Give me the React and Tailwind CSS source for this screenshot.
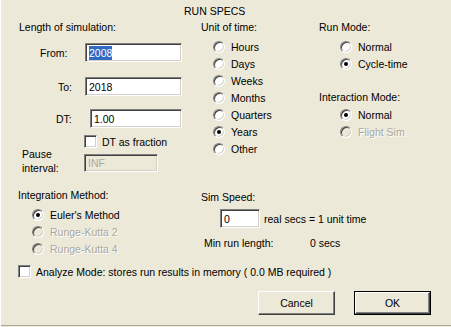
import React from "react";

// classic sunken edit box
function Field({ w, h = "h-[19px]", disabled, children }) {
  return (
    <div
      className={`${w} ${h} flex items-center border border-t-[#808080] border-l-[#808080] border-b-white border-r-white shadow-[inset_1px_1px_0_#404040,inset_-1px_-1px_0_#d4d0c8] pl-[3px] ${
        disabled ? "bg-[#ece9d8] text-[#aca899]" : "bg-white"
      }`}
    >
      {children}
    </div>
  );
}

function Radio({ label, checked, disabled }) {
  return (
    <div className="h-[17px] flex items-center">
      <div
        className={`w-[12px] h-[12px] rounded-full flex items-center justify-center border border-t-[#808080] border-l-[#808080] border-b-white border-r-white shadow-[inset_1px_1px_0_#404040,inset_-1px_-1px_0_#d4d0c8] ${
          disabled ? "bg-[#ece9d8]" : "bg-white"
        }`}
      >
        {checked && <div className="w-[4px] h-[4px] rounded-full bg-black" />}
      </div>
      <span
        className={`ml-[6px] ${disabled ? "text-[#aca899] [text-shadow:1px_1px_0_#fff]" : ""}`}
      >
        {label}
      </span>
    </div>
  );
}

function Check({ label }) {
  return (
    <div className="h-[13px] flex items-center">
      <div className="w-[13px] h-[13px] bg-white border border-t-[#808080] border-l-[#808080] border-b-white border-r-white shadow-[inset_1px_1px_0_#404040,inset_-1px_-1px_0_#d4d0c8]" />
      <span className="ml-[5px]">{label}</span>
    </div>
  );
}

function Button({ children, def }) {
  return (
    <div
      className={`w-[77px] h-[24px] flex items-center justify-center bg-[#ece9d8] ${
        def ? "border border-black" : ""
      }`}
    >
      <div className="w-full h-full flex items-center justify-center border border-t-white border-l-white border-b-[#404040] border-r-[#404040] shadow-[inset_-1px_-1px_0_#808080]">
        {children}
      </div>
    </div>
  );
}

export default function App() {
  return (
    <div
      className="w-[451px] h-[327px] bg-[#ece9d8] text-black text-[10.5px] leading-[14px] border-l border-l-white overflow-hidden"
      style={{ fontFamily: '"Liberation Sans", Arial, sans-serif' }}
    >
      <div className="pt-[4px] h-[18px] pl-[183px]">RUN SPECS</div>

      {/* top section */}
      <div className="mt-[2px] h-[168px] flex items-start">
        {/* length of simulation */}
        <div className="w-[200px] pl-[18px]">
          <div>Length of simulation:</div>
          <div className="mt-[9px] flex items-center">
            <span className="ml-[21px] w-[45px]">From:</span>
            <Field w="w-[97px]">
              <span className="bg-[#316ac5] text-white">2008</span>
            </Field>
          </div>
          <div className="mt-[15px] flex items-center">
            <span className="ml-[39px] w-[27px]">To:</span>
            <Field w="w-[97px]">2018</Field>
          </div>
          <div className="mt-[13px] flex items-center">
            <span className="ml-[37px] w-[34px]">DT:</span>
            <Field w="w-[92px]">1.00</Field>
          </div>
          <div className="mt-[7px] ml-[65px]">
            <Check label="DT as fraction" />
          </div>
          <div className="mt-[-1px] flex items-start">
            <div className="ml-[3px] w-[62px]">
              <div>Pause</div>
              <div>interval:</div>
            </div>
            <div className="mt-[7px]">
              <Field w="w-[74px]" h="h-[18px]" disabled>
                INF
              </Field>
            </div>
          </div>
        </div>

        {/* unit of time */}
        <div className="w-[118px]">
          <div>Unit of time:</div>
          <div className="mt-[4px] pl-[12px]">
            <Radio label="Hours" />
            <Radio label="Days" />
            <Radio label="Weeks" />
            <Radio label="Months" />
            <Radio label="Quarters" />
            <Radio label="Years" checked />
            <Radio label="Other" />
          </div>
        </div>

        {/* run mode */}
        <div className="flex-1">
          <div>Run Mode:</div>
          <div className="mt-[4px] pl-[21px]">
            <Radio label="Normal" />
            <Radio label="Cycle-time" checked />
          </div>
          <div className="mt-[18px]">Interaction Mode:</div>
          <div className="mt-[2px] pl-[21px]">
            <Radio label="Normal" checked />
            <Radio label="Flight Sim" disabled />
          </div>
        </div>
      </div>

      {/* integration / sim speed */}
      <div className="h-[77px] flex items-start">
        <div className="w-[200px] pl-[17px]">
          <div>Integration Method:</div>
          <div className="mt-[4px] pl-[14px]">
            <Radio label="Euler's Method" checked />
            <Radio label="Runge-Kutta 2" disabled />
            <Radio label="Runge-Kutta 4" disabled />
          </div>
        </div>
        <div className="flex-1 pt-[2px]">
          <div>Sim Speed:</div>
          <div className="mt-[5px] flex items-center">
            <div className="ml-[19px]">
              <Field w="w-[40px]">0</Field>
            </div>
            <span className="ml-[4px]">real secs = 1 unit time</span>
          </div>
          <div className="mt-[8px] flex">
            <span className="ml-[3px] w-[106px]">Min run length:</span>
            <span>0 secs</span>
          </div>
        </div>
      </div>

      <div className="pl-[17px]">
        <Check label="Analyze Mode: stores run results in memory ( 0.0 MB required )" />
      </div>

      <div className="mt-[13px] flex justify-end gap-[19px] pr-[20px]">
        <Button>Cancel</Button>
        <Button def>OK</Button>
      </div>

      <div className="mt-[10px] h-[1px] bg-[#aca899]" />
    </div>
  );
}
